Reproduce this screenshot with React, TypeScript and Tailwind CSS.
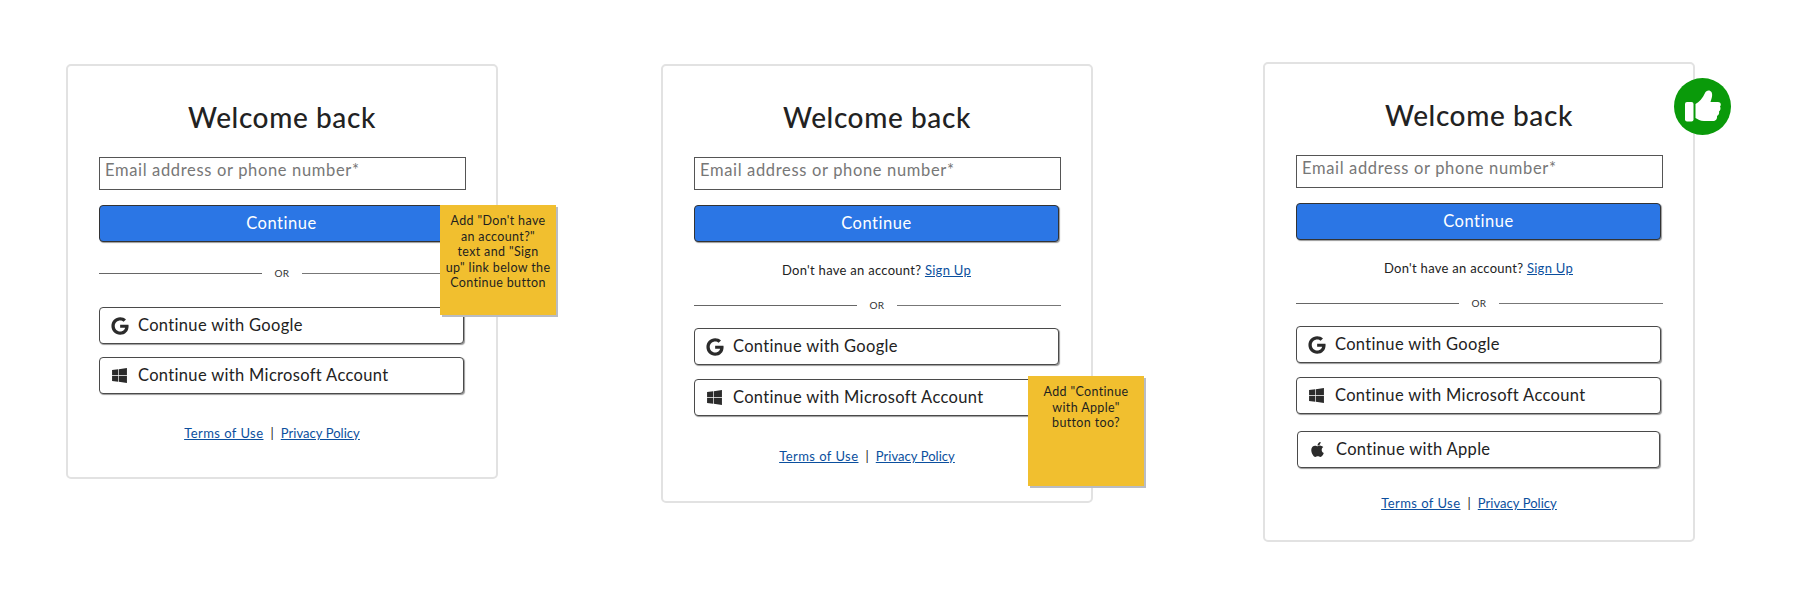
import { FaGoogle, FaWindows, FaApple } from "react-icons/fa";
import type { ReactNode } from "react";

function SocialButton({ icon, label, className = "" }: { icon: ReactNode; label: string; className?: string }) {
  return (
    <div className={`flex h-[37px] items-center rounded-[4px] border border-[#4a4a4a] bg-white pl-[11px] text-[16.5px] tracking-[0.33px] text-[#222] shadow-[1px_1px_1px_#999] ${className}`}>
      <span className="flex w-[27px] shrink-0 items-center text-[#2b2b2b]">{icon}</span>
      {label}
    </div>
  );
}

function Divider({ className }: { className: string }) {
  return (
    <div className={`flex w-[367px] items-center text-[10px] tracking-[0.3px] text-[#333] ${className}`}>
      <div className="h-px w-[163px] bg-[#666]" />
      <span className="flex w-[40px] justify-center">OR</span>
      <div className="h-px flex-1 bg-[#777]" />
    </div>
  );
}

function Note({ children, className }: { children: ReactNode; className: string }) {
  return (
    <div className={`absolute z-10 h-[110px] w-[116px] bg-[#f1bf2f] pt-[8px] text-center text-[12.5px] leading-[15.5px] tracking-[0.35px] whitespace-nowrap text-[#1f1f1f] shadow-[2px_2px_0_#b9bcc4] ${className}`}>
      {children}
    </div>
  );
}

function Card({
  className,
  signup,
  apple,
  overlay,
}: {
  className: string;
  signup?: boolean;
  apple?: boolean;
  overlay?: ReactNode;
}) {
  const linkSpacing = apple ? "mt-[26px] mb-[28px]" : signup ? "mt-[31px] mb-[36px]" : "mt-[30px] mb-[35px]";
  return (
    <div className={`relative flex w-[432px] shrink-0 flex-col rounded-[5px] border-2 border-[#e2e2e2] bg-white pl-[31px] ${className}`}>
      {overlay}
      <h1 className="mt-[32px] w-[366px] text-center text-[28px] leading-[38px] font-medium tracking-[0.6px] text-[#222]">
        Welcome back
      </h1>
      <div className="mt-[21px] h-[33px] w-[367px] border border-[#555] pl-[5px] text-[16.5px] leading-[24px] tracking-[0.66px] text-[#777]">
        Email address or phone number*
      </div>
      <div className="mt-[15px] flex h-[37px] w-[365px] items-center justify-center rounded-[4px] border border-[#333] bg-[#2b76e5] text-[16.5px] tracking-[0.55px] text-white shadow-[1px_1px_1px_#999]">
        Continue
      </div>
      {signup ? (
        <>
          <div className="mt-[19px] w-[365px] text-center text-[13px] leading-[18px] tracking-[0.28px] text-[#222]">
            Don't have an account? <span className="text-[#0b4f9e] underline">Sign Up</span>
          </div>
          <Divider className="mt-[19px] mb-[15px]" />
        </>
      ) : (
        <Divider className="mt-[24px] mb-[26px]" />
      )}
      <div className={`flex w-[365px] flex-col ${signup ? "gap-[14px]" : "gap-[13px]"}`}>
        <SocialButton icon={<FaGoogle size={18} />} label="Continue with Google" />
        <SocialButton icon={<FaWindows size={17} />} label="Continue with Microsoft Account" />
      </div>
      {apple && (
        <SocialButton
          className="mt-[17px] ml-[1px] w-[363px]"
          icon={<FaApple size={17} />}
          label="Continue with Apple"
        />
      )}
      <div className={`flex w-[346px] justify-center gap-[7px] text-[13px] leading-[18px] whitespace-nowrap text-[#222] ${linkSpacing}`}>
        <span className="tracking-[0.45px] text-[#0b4f9e] underline">Terms of Use</span>
        <span>|</span>
        <span className="tracking-[0.05px] text-[#0b4f9e] underline">Privacy Policy</span>
      </div>
    </div>
  );
}

export default function App() {
  return (
    <div className="flex h-[594px] w-[1800px] items-start overflow-hidden bg-white pl-[66px] font-['Lato',sans-serif]">
      <Card
        className="mt-[64px]"
        overlay={
          <Note className="top-[139px] left-[372px]">
            Add "Don't have
            <br />
            an account?"
            <br />
            text and "Sign
            <br />
            up" link below the
            <br />
            Continue button
          </Note>
        }
      />
      <Card
        className="mt-[64px] ml-[163px]"
        signup
        overlay={
          <Note className="top-[310px] left-[365px]">
            Add "Continue
            <br />
            with Apple"
            <br />
            button too?
          </Note>
        }
      />
      <Card
        className="mt-[62px] ml-[170px]"
        signup
        apple
        overlay={
          <div className="absolute top-[14px] left-[409px] h-[57px] w-[57px]">
            <svg viewBox="0 0 57 57" className="h-full w-full">
              <circle cx="28.5" cy="28.5" r="28.5" fill="#0a9a0a" />
              <rect x="11" y="24" width="8.5" height="19.5" rx="2" fill="#fff" />
              <path
                d="M21.5 26 C25 24 29 20 31 15 C32 12 36 11.5 37.5 14 C39 17 37.5 21 36.5 24 L44 24 C47 24 47.5 27 46 28.5 C47 30 46.5 32.5 45 33.5 C45.5 35.5 44.5 37.5 43 38 C43.5 41 41.5 43 39 43 L30 43 C26 43 24 41 21.5 40 Z"
                fill="#fff"
              />
            </svg>
          </div>
        }
      />
    </div>
  );
}
